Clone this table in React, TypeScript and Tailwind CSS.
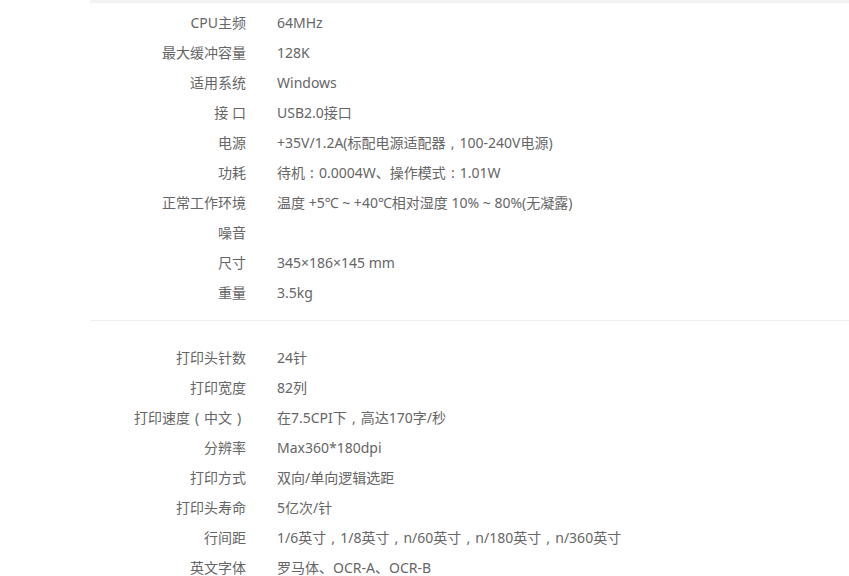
const groupA: [string, string][] = [
  ["CPU主频", "64MHz"],
  ["最大缓冲容量", "128K"],
  ["适用系统", "Windows"],
  ["接 口", "USB2.0接口"],
  ["电源", "+35V/1.2A(标配电源适配器，100-240V电源)"],
  ["功耗", "待机：0.0004W、操作模式：1.01W"],
  ["正常工作环境", "温度 +5℃ ~ +40℃相对湿度 10% ~ 80%(无凝露)"],
  ["噪音", ""],
  ["尺寸", "345×186×145 mm"],
  ["重量", "3.5kg"],
];

const groupB: [string, string][] = [
  ["打印头针数", "24针"],
  ["打印宽度", "82列"],
  ["打印速度（中文）", "在7.5CPI下，高达170字/秒"],
  ["分辨率", "Max360*180dpi"],
  ["打印方式", "双向/单向逻辑选距"],
  ["打印头寿命", "5亿次/针"],
  ["行间距", "1/6英寸，1/8英寸，n/60英寸，n/180英寸，n/360英寸"],
  ["英文字体", "罗马体、OCR-A、OCR-B"],
];

const PUNCT: Record<string, string> = { "，": ",", "：": ":", "（": "(", "）": ")" };

// the original font centres fullwidth punctuation in its 1em box
function Txt({ s }: { s: string }) {
  const parts = s.split(/([，：（）])/);
  return (
    <>
      {parts.map((p, i) =>
        PUNCT[p] ? (
          <span key={i} className="inline-block w-[1em] text-center">
            {PUNCT[p]}
          </span>
        ) : (
          <span key={i}>{p}</span>
        )
      )}
    </>
  );
}

function Rows({ rows }: { rows: [string, string][] }) {
  return (
    <div className="flex flex-col">
      {rows.map(([k, v], i) => (
        <div key={i} className="flex h-[30px] items-center">
          <div className="w-[156px] shrink-0 text-right whitespace-pre">
            <Txt s={k} />
          </div>
          <div className="pl-[31px] whitespace-nowrap">
            <Txt s={v} />
          </div>
        </div>
      ))}
    </div>
  );
}

export default function App() {
  return (
    <div
      className="w-[849px] h-[576px] overflow-hidden bg-white text-[14px] text-[#666]"
      style={{ fontFamily: '"Noto Sans", "Noto Sans CJK SC", sans-serif' }}
    >
      <div className="ml-[90px]">
        <div className="h-[3px] bg-[#f2f2f2]" />
        <div className="pt-[4px] pb-[13px]">
          <Rows rows={groupA} />
        </div>
        <div className="h-px bg-[#eeeeee]" />
        <div className="pt-[21px]">
          <Rows rows={groupB} />
        </div>
      </div>
    </div>
  );
}
